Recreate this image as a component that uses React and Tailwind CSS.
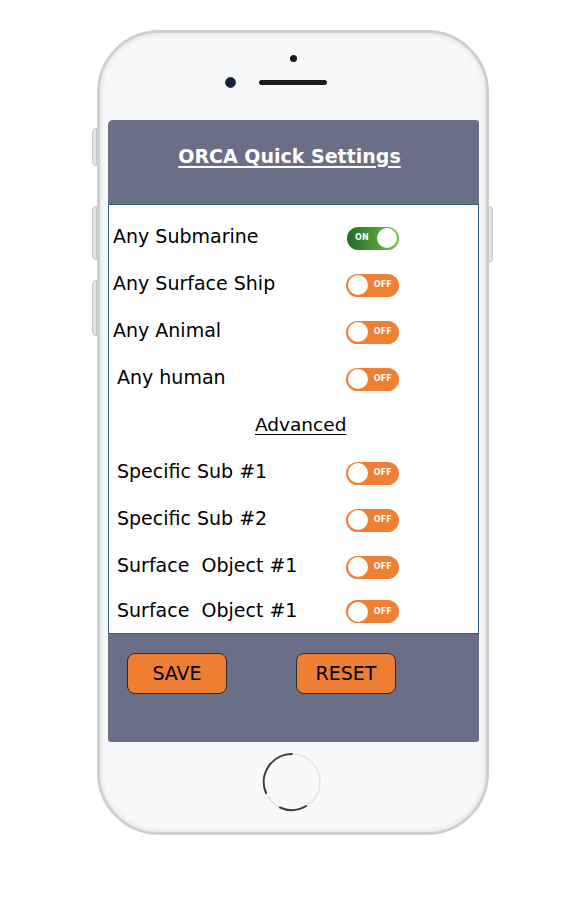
import React from 'react';

const rows = [
  { label: 'Any Submarine', on: true, indent: 'pl-[4px]' },
  { label: 'Any Surface Ship', on: false, indent: 'pl-[4px]' },
  { label: 'Any Animal', on: false, indent: 'pl-[4px]' },
  { label: 'Any human', on: false, indent: 'pl-[8px]' },
];

const advanced = [
  'Specific Sub #1',
  'Specific Sub #2',
  'Surface  Object #1',
  'Surface  Object #1',
];

const Toggle = ({ on }) =>
  on ? (
    <div className="w-[52px] h-[23px] rounded-full bg-gradient-to-r from-[#1b6a2d] to-[#7cc444] flex items-center justify-between pl-[8px] pr-[2px]">
      <span className="text-white text-[8px] font-bold tracking-wide">ON</span>
      <span className="w-[20px] h-[20px] rounded-full bg-white" />
    </div>
  ) : (
    <div className="w-[53px] h-[23px] rounded-full bg-[#ef7f32] flex items-center pl-[2px] pr-[7px] justify-between">
      <span className="w-[20px] h-[20px] rounded-full bg-white" />
      <span className="text-white text-[8px] font-bold tracking-wide">OFF</span>
    </div>
  );

const Row = ({ label, on, indent, h = 'h-[47px]' }) => (
  <div className={`flex items-center ${h} ${indent} pr-[79px]`}>
    <span className="whitespace-pre text-[19px] text-black">{label}</span>
    <div className="ml-auto pt-[3px]">
      <Toggle on={on} />
    </div>
  </div>
);

export default function App() {
  return (
    <div className="w-[580px] h-[897px] bg-white pt-[30px] pl-[97px] font-['DejaVu_Sans',sans-serif]">
      <div className="relative w-[392px] h-[805px] rounded-[62px] border-[3px] border-[#cfcfcf] bg-[#f8f9fa] shadow-[inset_0_0_6px_rgba(0,0,0,0.12)] flex flex-col">
        {/* side buttons */}
        <div className="absolute left-[-8px] top-[95px] w-[5px] h-[38px] rounded-l bg-[#e4e4e4] border border-[#c8c8c8]" />
        <div className="absolute left-[-8px] top-[173px] w-[5px] h-[54px] rounded-l bg-[#e4e4e4] border border-[#c8c8c8]" />
        <div className="absolute left-[-8px] top-[247px] w-[5px] h-[56px] rounded-l bg-[#e4e4e4] border border-[#c8c8c8]" />
        <div className="absolute right-[-7px] top-[173px] w-[5px] h-[57px] rounded-r bg-[#e4e4e4] border border-[#c8c8c8]" />

        {/* top: sensor, camera, earpiece */}
        <div className="h-[87px] flex flex-col items-center pt-[22px]">
          <div className="w-[7px] h-[7px] rounded-full bg-[#1a1a1a]" />
          <div className="mt-[15px] flex items-center">
            <div className="w-[11px] h-[11px] rounded-full bg-[#14213a] border border-[#2d3d5c]" />
            <div className="w-[23px]" />
            <div className="w-[68px] h-[5px] rounded-full bg-[#1b1b1b]" />
            <div className="w-[23px]" />
            <div className="w-[11px]" />
          </div>
        </div>

        {/* screen */}
        <div className="ml-[8px] w-[371px] h-[622px] bg-[#6a6e87] rounded-tl-[5px] rounded-tr-[3px] rounded-b-[3px] flex flex-col">
          <div className="h-[84px] flex items-center justify-center pb-[12px] pr-[8px]">
            <h1 className="text-white text-[19px] font-bold underline underline-offset-[3px] decoration-[2px]">
              ORCA Quick Settings
            </h1>
          </div>

          <div className="h-[430px] bg-white border border-[#2c5d8f] pt-[8px]">
            {rows.map((r, i) => (
              <Row key={i} {...r} />
            ))}
            <div className="h-[47px] flex items-center pl-[146px]">
              <span className="text-[18.5px] text-black underline underline-offset-[3px]">Advanced</span>
            </div>
            {advanced.map((label, i) => (
              <Row key={i} label={label} on={false} indent="pl-[8px]" h={i === 3 ? 'h-[42px]' : 'h-[47px]'} />
            ))}
          </div>

          <div className="flex pt-[19px] pl-[19px] gap-[69px]">
            <button className="w-[100px] h-[41px] rounded-[8px] bg-[#ee7e32] border border-[#2a2a2a] text-[19px] text-black">
              SAVE
            </button>
            <button className="w-[100px] h-[41px] rounded-[8px] bg-[#ee7e32] border border-[#2a2a2a] text-[19px] text-black">
              RESET
            </button>
          </div>
        </div>

        {/* home button */}
        <div className="flex-1 flex justify-center pt-[9px] pr-[3px]">
          <svg width="62" height="62" viewBox="0 0 62 62">
            <circle cx="31" cy="31" r="28" fill="none" stroke="#e6e6e6" strokeWidth="1.5" />
            <path d="M 5 42 A 28 28 0 0 1 31 3" fill="none" stroke="#3a3a3a" strokeWidth="2" strokeLinecap="round" />
            <path d="M 19 56.5 A 28 28 0 0 0 45 55" fill="none" stroke="#3a3a3a" strokeWidth="2" strokeLinecap="round" />
          </svg>
        </div>
      </div>
    </div>
  );
}
